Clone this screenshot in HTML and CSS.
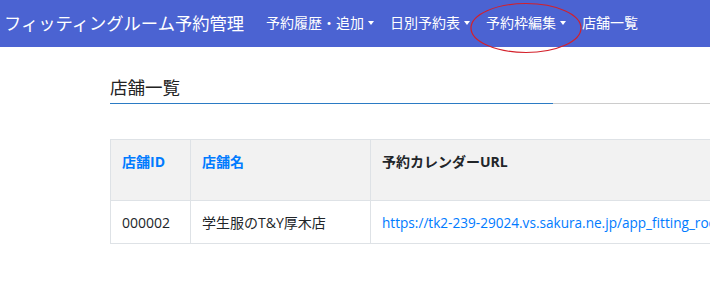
FILE: index.html
```html
<!DOCTYPE html>
<html lang="ja">
<head>
<meta charset="utf-8">
<title>店舗一覧</title>
<link rel="stylesheet" href="styles.css">
</head>
<body>
<nav class="navbar">
  <a class="brand" href="#">フィッティングルーム予約管理</a>
  <ul class="nav">
    <li><a class="nav-link dropdown" href="#">予約履歴・追加</a></li>
    <li><a class="nav-link dropdown" href="#">日別予約表</a></li>
    <li class="marked"><a class="nav-link dropdown" href="#">予約枠編集</a>
      <svg class="circle" width="114" height="52" viewBox="0 0 114 52"><ellipse cx="57" cy="26" rx="55" ry="24.5" fill="none" stroke="#d4202a" stroke-width="1.2"/></svg>
    </li>
    <li><a class="nav-link" href="#">店舗一覧</a></li>
  </ul>
</nav>
<main class="content">
  <div class="title-bar"><h2 class="title">店舗一覧</h2></div>
  <table class="shops">
    <thead>
      <tr>
        <th class="c1"><a href="#">店舗ID</a></th>
        <th class="c2"><a href="#">店舗名</a></th>
        <th class="c3">予約カレンダーURL</th>
      </tr>
    </thead>
    <tbody>
      <tr>
        <td>000002</td>
        <td>学生服のT&amp;Y厚木店</td>
        <td><a class="url" href="#">https://tk2-239-29024.vs.sakura.ne.jp/app_fitting_room/calendar/000002</a></td>
      </tr>
    </tbody>
  </table>
</main>
</body>
</html>
```
FILE: styles.css
```css
* { box-sizing: border-box; }
html, body { margin: 0; padding: 0; }
body {
  font-family: "Open Sans", "Noto Sans CJK JP", sans-serif;
  font-size: 14px;
  line-height: 1.5;
  color: #212529;
  background: #fff;
  overflow: hidden;
  width: 710px;
}
a { text-decoration: none; }
.navbar {
  height: 47px;
  background: #4b63d2;
  display: flex;
  align-items: center;
  padding: 0 0 2px 4px;
  font-family: "Noto Sans CJK JP", sans-serif;
}
.brand {
  color: #fff;
  font-size: 17.3px;
  margin-right: 14px;
  white-space: nowrap;
}
.nav {
  display: flex;
  list-style: none;
  margin: 0;
  padding: 0;
}
.nav li { position: relative; }
.nav-link {
  display: block;
  color: #fff;
  padding: 8px 8px;
  font-size: 14px;
  white-space: nowrap;
}
.dropdown::after {
  content: "";
  display: inline-block;
  margin-left: 4px;
  vertical-align: 3px;
  border-top: 4.2px solid #fff;
  border-left: 3.8px solid transparent;
  border-right: 3.8px solid transparent;
}
.circle {
  position: absolute;
  left: -9px;
  top: -2px;
  pointer-events: none;
}
.content {
  padding: 27px 0 0 110px;
}
.title-bar {
  border-bottom: 1px solid #cccccc;
  width: 600px;
}
.title {
  margin: 0 0 -1px;
  width: 443px;
  font-family: "Noto Sans CJK JP", sans-serif;
  font-size: 17.5px;
  font-weight: normal;
  line-height: 1.5;
  padding-bottom: 3px;
  border-bottom: 1px solid #2b7bc4;
  color: #222;
}
.shops {
  margin-top: 35px;
  border-collapse: collapse;
  table-layout: fixed;
  width: 600px;
}
.shops th, .shops td {
  border: 1px solid #dee2e6;
  text-align: left;
  white-space: nowrap;
  overflow: hidden;
}
.shops th {
  background: #f2f2f2;
  vertical-align: top;
  height: 61px;
  padding: 11px 11px;
  font-weight: bold;
}
.shops td {
  height: 43px;
  padding: 0 11px;
  vertical-align: middle;
}
.shops a { color: #007bff; }
.url { font-size: 13.6px; }
.c1 { width: 80px; }
.c2 { width: 180px; }
.c3 { width: 340px; }
```
